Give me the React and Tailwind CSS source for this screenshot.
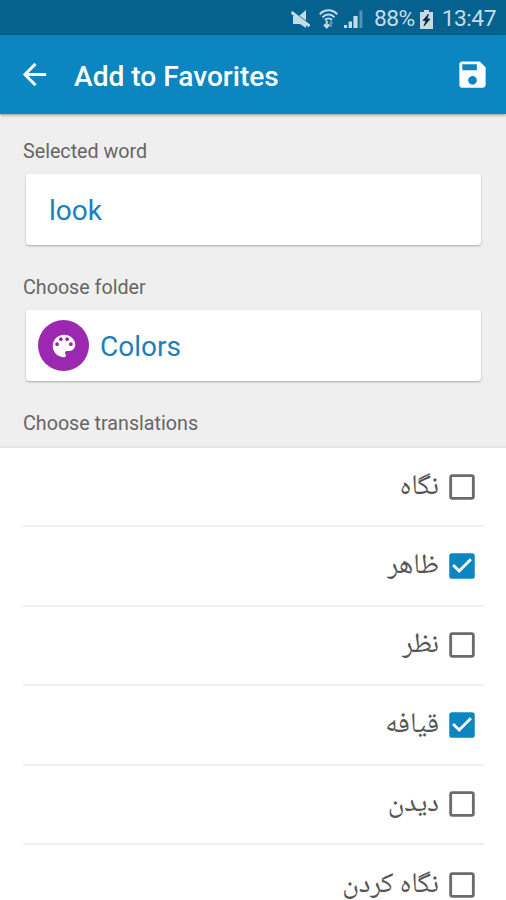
import React, { useState } from 'react';
import {
  MdArrowBack,
  MdSave,
  MdCheckBox,
  MdCheckBoxOutlineBlank
} from 'react-icons/md';

const initialTranslations = [
  { id: 1, text: 'نگاه', checked: false },
  { id: 2, text: 'ظاهر', checked: true },
  { id: 3, text: 'نظر', checked: false },
  { id: 4, text: 'قیافه', checked: true },
  { id: 5, text: 'دیدن', checked: false },
  { id: 6, text: 'نگاه کردن', checked: false }
];

const MutedIcon = () => (
  <svg className="w-[19px] h-[19px]" viewBox="0 0 19 19" fill="currentColor">
    <path d="M15 0v18L9 14H2V6h6z" />
    <path d="M0 0.5L18.5 14.2" stroke="#05628f" strokeWidth="1.6" />
    <path d="M0.5 2.2L18.5 16" stroke="currentColor" strokeWidth="3" />
  </svg>
);

const WifiIcon = () => (
  <svg className="w-[19px] h-[20px]" viewBox="0 0 19 20" fill="none" stroke="currentColor" strokeWidth="2">
    <path d="M0.8 5.2C5.8 0 13.2 0 18.2 5.2" />
    <path d="M3.5 8.2C7 4.6 12 4.6 15.5 8.2" />
    <path d="M6 11C8 9 11 9 13 11" />
    <path d="M7.7 11.5v7M5 15.5l2.7 3 2.7-3" />
    <path d="M12 18v-5M10.6 14.6l1.4-1.8 1.6 1.8" opacity="0.4" />
  </svg>
);

const SignalIcon = () => (
  <svg className="w-[19px] h-[19px]" viewBox="0 0 19 19" fill="currentColor">
    <rect x="0" y="15" width="3" height="3" />
    <rect x="4.6" y="11.5" width="3.4" height="6.5" />
    <rect x="9.4" y="6" width="4.2" height="12" />
    <rect x="15.4" y="0.5" width="3" height="17.5" opacity="0.4" />
  </svg>
);

const BatteryIcon = () => (
  <svg className="w-[13px] h-[19px]" viewBox="0 0 13 19" fill="currentColor">
    <path d="M4 0h5v2h4v17H0V2h4z" />
    <path d="M8.5 4L3 10.5h3L4 16l6-7H7z" fill="#0b2a3c" stroke="#0b2a3c" strokeWidth="0.8" />
  </svg>
);

const PaletteIcon = () => (
  <svg className="w-[30px] h-[30px]" viewBox="0 0 24 24" fill="currentColor">
    <path d="M12 3c-4.97 0-9 4.03-9 9s4.03 9 9 9c.83 0 1.5-.67 1.5-1.5 0-.39-.15-.74-.39-1.01-.23-.26-.38-.61-.38-.99 0-.83.67-1.5 1.5-1.5H16c2.76 0 5-2.24 5-5 0-4.42-4.03-8-9-8zm-5.5 9c-.83 0-1.5-.67-1.5-1.5S5.67 9 6.5 9 8 9.67 8 10.5 7.33 12 6.5 12zm3-4C8.67 8 8 7.33 8 6.5S8.67 5 9.5 5s1.5.67 1.5 1.5S10.33 8 9.5 8zm5 0c-.83 0-1.5-.67-1.5-1.5S13.67 5 14.5 5s1.5.67 1.5 1.5S15.33 8 14.5 8zm3 4c-.83 0-1.5-.67-1.5-1.5S16.67 9 17.5 9s1.5.67 1.5 1.5-.67 1.5-1.5 1.5z" />
  </svg>
);

const StatusBar = () => (
  <div className="h-[35px] shrink-0 bg-[#05628f] text-[#c5dce8] flex items-center justify-end pr-[10px] pt-[3px]">
    <MutedIcon />
    <span className="ml-[9px]"><WifiIcon /></span>
    <span className="ml-[6px]"><SignalIcon /></span>
    <span className="ml-[11px] text-[22.8px] tracking-[-0.5px] leading-none">88%</span>
    <span className="ml-[5px]"><BatteryIcon /></span>
    <span className="ml-[9px] text-[22.8px] tracking-[-0.5px] leading-none">13:47</span>
  </div>
);

const FieldCard = ({ children }) => (
  <div className="ml-[26px] mr-[25px] h-[71px] bg-white rounded-[3px] shadow-[0_1px_2px_rgba(0,0,0,0.3)] flex items-center text-[28px] text-[#1c7fb8]">
    {children}
  </div>
);

const SectionLabel = ({ children }) => (
  <div className="h-[60px] pl-[23px] pt-[25px] text-[19.7px] leading-[26px] text-[#666666]">
    {children}
  </div>
);

const TranslationRow = ({ item, onToggle }) => (
  <div className="h-[79.4px] ml-[23px] mr-[22px] border-b-2 border-[#f0f0f0] last:border-b-0">
    <button
      onClick={() => onToggle(item.id)}
      className="w-full h-full flex items-center justify-end pr-[5px]"
    >
      <span
        dir="rtl"
        className="mr-[6px] pt-0.5 text-[28.2px] leading-[26px] text-[#555555] font-['Noto_Naskh_Arabic','Noto_Sans_Arabic','DejaVu_Sans',sans-serif]"
      >
        {item.text}
      </span>
      {item.checked ? (
        <MdCheckBox className="w-[34px] h-[34px] text-[#0b86c0]" />
      ) : (
        <MdCheckBoxOutlineBlank className="w-[34px] h-[34px] text-[#6b6b6b]" />
      )}
    </button>
  </div>
);

const App = () => {
  const [translations, setTranslations] = useState(initialTranslations);

  const handleToggle = (id) => {
    setTranslations(
      translations.map((t) => (t.id === id ? { ...t, checked: !t.checked } : t))
    );
  };

  return (
    <div className="w-full h-[900px] overflow-hidden bg-[#efefef] font-['Roboto',sans-serif] flex flex-col">
      <StatusBar />

      {/* App bar */}
      <div className="h-[79px] shrink-0 bg-[#0b86c0] text-white flex items-center pl-[17px] pr-[16px] shadow-[0_1px_3px_rgba(0,0,0,0.4)]">
        <MdArrowBack className="w-[35px] h-[35px]" />
        <h1 className="ml-[22px] pt-[5px] text-[28.1px] leading-none font-medium">Add to Favorites</h1>
        <MdSave className="ml-auto w-[35px] h-[35px]" />
      </div>

      {/* Form */}
      <div className="h-[334px] shrink-0 border-b-2 border-[#e6e6e6]">
        <SectionLabel>Selected word</SectionLabel>
        <FieldCard>
          <span className="pl-[23px] pt-0.5">look</span>
        </FieldCard>
        <div className="h-[5px]" />
        <SectionLabel>Choose folder</SectionLabel>
        <FieldCard>
          <div className="ml-[12px] mr-[11px] w-[51px] h-[51px] rounded-full bg-[#9c27b0] text-white flex items-center justify-center">
            <PaletteIcon />
          </div>
          <span className="pt-0.5">Colors</span>
        </FieldCard>
        <div className="h-[5px]" />
        <SectionLabel>Choose translations</SectionLabel>
      </div>

      {/* Translations */}
      <div className="flex-1 bg-white">
        {translations.map((item) => (
          <TranslationRow key={item.id} item={item} onToggle={handleToggle} />
        ))}
      </div>
    </div>
  );
};

export default App;
